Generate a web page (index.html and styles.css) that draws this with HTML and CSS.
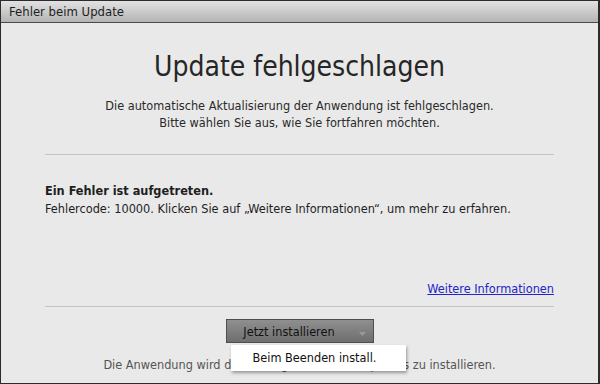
FILE: index.html
```html
<!DOCTYPE html>
<html lang="de">

<head>
    <meta charset="UTF-8">
    <title>Fehler beim Update</title>
    <link rel="stylesheet" href="styles.css">
</head>

<body>
    <div class="window">
        <div class="titlebar">Fehler beim Update</div>

        <div class="content">
            <h1>Update fehlgeschlagen</h1>
            <p class="intro">
                Die automatische Aktualisierung der Anwendung ist fehlgeschlagen.<br>
                Bitte wählen Sie aus, wie Sie fortfahren möchten.
            </p>

            <hr class="divider">

            <div class="error">
                <strong>Ein Fehler ist aufgetreten.</strong><br>
                Fehlercode: 10000. Klicken Sie auf „Weitere Informationen“, um mehr zu erfahren.
            </div>

            <div class="more">
                <a href="#">Weitere Informationen</a>
            </div>

            <hr class="divider">

            <div class="actions">
                <div class="split-btn">
                    <button class="main-btn">Jetzt installieren</button>
                    <button class="arrow-btn">
                        <svg width="7" height="4" viewBox="0 0 7 4"><path d="M0 0h7L3.5 4z" fill="#9a9a9a"/></svg>
                    </button>
                    <div class="menu">
                        <div class="menu-item">Beim Beenden install.</div>
                    </div>
                </div>
                <p class="note">Die Anwendung wird dann neu gestartet, um Updates zu installieren.</p>
            </div>
        </div>
    </div>
</body>

</html>
```

FILE: styles.css
```css
body {
    margin: 0;
    padding: 0;
    font-family: "DejaVu Sans Condensed", "DejaVu Sans", sans-serif;
    background: #2b2b2b;
}

.window {
    width: 600px;
    height: 384px;
    box-sizing: border-box;
    border: 1px solid #2b2b2b;
    border-right-width: 2px;
    background: #e9e9e9;
    display: flex;
    flex-direction: column;
}

.titlebar {
    height: 21px;
    line-height: 22px;
    padding-left: 8px;
    font-size: 13px;
    color: #1e1e1e;
    background: linear-gradient(#e2e2e2, #b4b4b4);
    border-bottom: 1px solid #4a4a4a;
}

.content {
    flex: 1;
    padding: 0 44px;
    display: flex;
    flex-direction: column;
    color: #2a2a2a;
    font-size: 12.6px;
}

h1 {
    margin: 26px 0 0;
    font-size: 28px;
    line-height: 36px;
    font-weight: normal;
    text-align: center;
    color: #262626;
}

.intro {
    margin: 12px 0 0;
    line-height: 17px;
    text-align: center;
}

.divider {
    margin: 23px 0 0;
    border: none;
    border-top: 1px solid #c4c4c4;
}

.divider + .error {
    margin-top: 27px;
}

.error {
    line-height: 18px;
    color: #1e1e1e;
}

.more {
    margin-top: 62px;
    text-align: right;
    line-height: 18px;
}

.more a {
    color: #2424c8;
}

.more + .divider {
    margin-top: 8px;
}

.actions {
    display: flex;
    flex-direction: column;
    align-items: center;
    margin-top: 12px;
}

.split-btn {
    position: relative;
    display: flex;
    height: 24px;
    border: 1px solid #4e4e4e;
    box-sizing: border-box;
    background: linear-gradient(#8f8f8f, #6e6e6e);
}

.split-btn button {
    border: none;
    background: none;
    font-family: inherit;
    font-size: 12.6px;
    color: #111;
    padding: 0;
}

.main-btn {
    width: 125px;
}

.arrow-btn {
    width: 21px;
}

.menu {
    position: absolute;
    top: 25px;
    left: 4px;
    width: 175px;
    height: 26px;
    background: #fff;
    box-shadow: 1px 2px 3px rgba(0, 0, 0, 0.35);
    z-index: 10;
}

.menu-item {
    padding-left: 22px;
    line-height: 26px;
    font-size: 12.6px;
    color: #111;
}

.note {
    margin: 13px 0 0;
    color: #555;
    line-height: 17px;
}
```
